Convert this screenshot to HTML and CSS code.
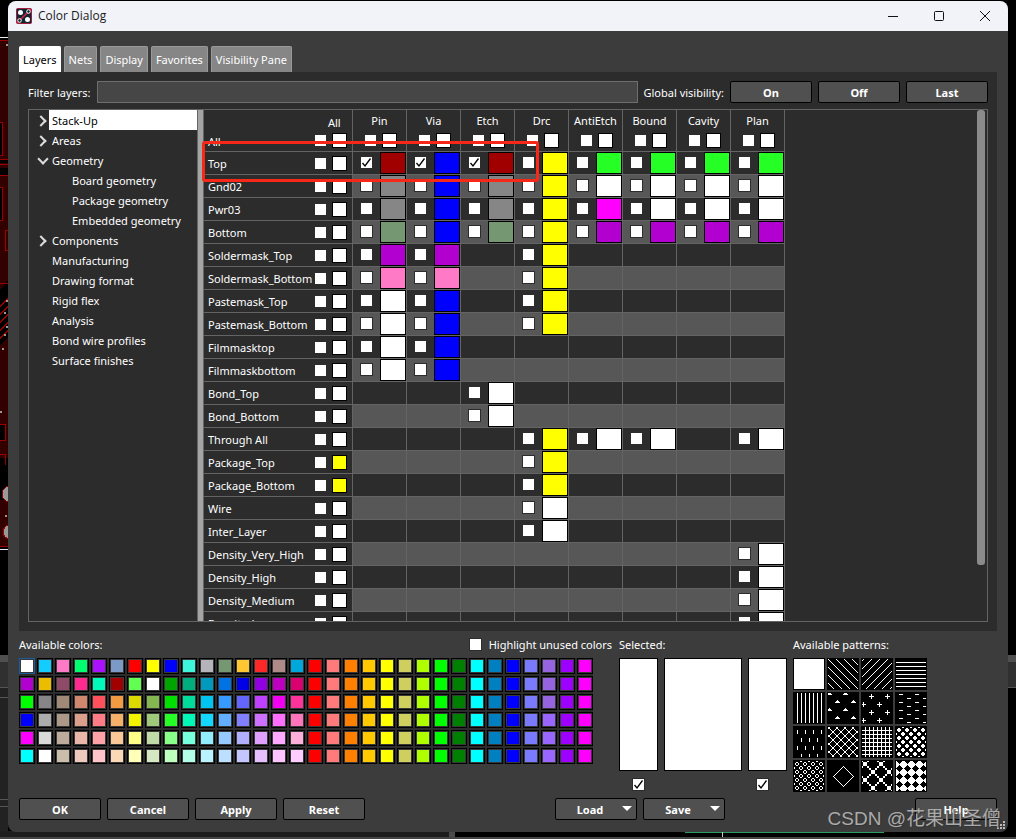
FILE: index.html
```html
<!DOCTYPE html>
<html lang="en">
<head>
<meta charset="utf-8">
<title>Color Dialog</title>
<link rel="stylesheet" href="styles.css">
</head>
<body>
<svg class="backdrop left" width="8" height="839" viewBox="0 0 8 839" aria-hidden="true" shape-rendering="crispEdges">
  <path fill="#000" d="M0 0h8v839H0z"/>
  <path fill="#330000" d="M0 40h8v240L0 290zM0 345h8v145H0zM0 345l8-8v20H0zM0 500h8v46H0z"/>
  <path fill="#000" d="M0 122h2v34H0zM0 160h8v3H0zM0 168h8v7H0zM0 188h2v33H0zM0 425h5v16H0zM0 458h8v32H0z"/>
  <path fill="none" stroke="#900" d="M0 40.500h8M0 122.500h2.500v33H0M0 159.500h8M0 164.500h8M0 175.500h8M0 187.500h2.500v33H0M8 230.500H5.500v20H8M0 283.500h8M0 306.500l8-8M0 314.500l8-8M0 322.500l8-8M0 330.500l8-8M0 338.500l8-8M0 424.500h5.500v16H0M0 454.500h5.500v10M0 546.500h8"/>
  <path fill="none" stroke="#eee" d="M0 37.500h8M0 549.500h8"/>
  <path fill="#999" d="M6 44h2v2H6zM6 300h2v2H6zM4 312h2v2H4zM6 326h2v2H6zM4 334h2v2H4zM2 348h2v2H2zM0 411h2v2H0zM5 515h2v2H5z"/>
  <circle cx="10" cy="494" r="8" fill="#999" stroke="#900"/><circle cx="10" cy="532" r="7" fill="#999" stroke="#900"/>
  <path fill="#505050" d="M0 655h8v7H0z"/><path fill="#303030" d="M0 662h8v26H0z"/><path fill="#222" d="M0 688h8v151H0z"/>
  <path stroke="#555" d="M0 687.500h8M0 697.500h8M0 799.500h8M0 806.500h8"/>
</svg>
<svg class="backdrop right" width="8" height="839" viewBox="0 0 8 839" aria-hidden="true" shape-rendering="crispEdges">
  <path fill="#000" d="M0 0h8v839H0z"/><path fill="#505050" d="M0 655h8v7H0z"/><path fill="#303030" d="M0 662h8v25H0z"/><path stroke="#555" d="M0 687.500h8"/>
</svg>
<svg class="backdrop bottom" width="1016" height="8" viewBox="0 0 1016 8" aria-hidden="true" shape-rendering="crispEdges">
  <path fill="#000" d="M0 0h1016v8H0z"/><path fill="#1d1d1d" d="M0 0h449v8H0z"/><path fill="#4a4a4a" d="M449 0h6v7h-6z"/><path fill="#2b9c62" d="M685 0h199v2H685z"/><path fill="#ccc" d="M722 1h1v5h-1z"/><path fill="#444" d="M0 6h1016v2H0z"/>
</svg>

<main class="dialog">
  <header class="titlebar">
    <svg class="app-icon" width="16" height="16" viewBox="0 0 16 16" aria-hidden="true">
      <rect x=".5" y=".5" width="15" height="15" rx="1" fill="#112634" stroke="#a51c38"/>
      <path d="M4 12L12 4M12 4l3-3M1 15l3-3" stroke="#e01f3f" stroke-width="1.500"/>
      <circle cx="4.500" cy="4.500" r="2.500" fill="#fff"/><circle cx="11.500" cy="11.500" r="2.500" fill="#fff"/>
      <circle cx="12.500" cy="3.500" r="1.800" fill="#112634" stroke="#fff"/><circle cx="3.500" cy="12.500" r="1.800" fill="#112634" stroke="#fff"/>
    </svg>
    <h1>Color Dialog</h1>
    <button class="win" aria-label="Minimize"><svg width="10" height="10" viewBox="0 0 10 10"><path d="M0 5.500h10" stroke="#111"/></svg></button>
    <button class="win" aria-label="Maximize"><svg width="10" height="10" viewBox="0 0 10 10"><rect x=".5" y=".5" width="9" height="9" rx="1" fill="none" stroke="#111"/></svg></button>
    <button class="win" aria-label="Close"><svg width="10" height="10" viewBox="0 0 10 10"><path d="M0 0l10 10M10 0L0 10" stroke="#111"/></svg></button>
  </header>

  <div class="content">
    <nav class="tabs" role="tablist">
      <button class="tab active" role="tab" aria-selected="true">Layers</button>
      <button class="tab" role="tab">Nets</button>
      <button class="tab" role="tab">Display</button>
      <button class="tab" role="tab">Favorites</button>
      <button class="tab" role="tab">Visibility Pane</button>
    </nav>

    <section class="panel">
      <div class="filter">
        <label for="filter">Filter layers:</label>
        <input id="filter" class="filter-input" type="text">
        <span class="filter-text">Global visibility:</span>
        <div class="button-group">
          <button class="btn">On</button>
          <button class="btn">Off</button>
          <button class="btn">Last</button>
        </div>
      </div>
      <div class="frame">
        <ul class="tree">
          <li class="closed selected"><span>Stack-Up</span></li>
          <li class="closed"><span>Areas</span></li>
          <li class="open"><span>Geometry</span></li>
          <li class="child"><span>Board geometry</span></li>
          <li class="child"><span>Package geometry</span></li>
          <li class="child"><span>Embedded geometry</span></li>
          <li class="closed"><span>Components</span></li>
          <li><span>Manufacturing</span></li>
          <li><span>Drawing format</span></li>
          <li><span>Rigid flex</span></li>
          <li><span>Analysis</span></li>
          <li><span>Bond wire profiles</span></li>
          <li><span>Surface finishes</span></li>
        </ul>
        <div class="splitter"></div>
        <div class="grid-view">
          <table class="layers">
            <thead><tr id="head"></tr></thead>
            <tbody id="rows"></tbody>
          </table>
          <div class="scroll"><div class="thumb"></div></div>
        </div>
        <div class="annotation"></div>
      </div>
    </section>

    <div class="pickers">
      <section class="colors">
        <div class="picker-head">
          <span>Available colors:</span>
          <label class="unused"><input type="checkbox" class="check">Highlight unused colors</label>
        </div>
        <div class="palette" id="palette"></div>
      </section>
      <section>
        <div class="picker-head">Selected:</div>
        <div class="previews">
          <div class="preview"><div class="preview-box"></div><input type="checkbox" class="check" aria-label="Use color" checked></div>
          <div class="preview wide"><div class="preview-box"></div></div>
          <div class="preview end"><div class="preview-box"></div><input type="checkbox" class="check" aria-label="Use pattern" checked></div>
        </div>
      </section>
      <section>
        <div class="picker-head">Available patterns:</div>
        <div class="patterns" id="patterns"></div>
      </section>
    </div>

    <footer class="actions">
      <button class="btn">OK</button>
      <button class="btn">Cancel</button>
      <button class="btn">Apply</button>
      <button class="btn">Reset</button>
      <span class="space"></span>
      <button class="btn menu">Load</button>
      <button class="btn menu">Save</button>
      <span class="space"></span>
      <button class="btn">Help</button>
    </footer>
  </div>
  <svg class="grip" width="8" height="8" viewBox="0 0 8 8" aria-hidden="true"><path fill="#bbb" d="M6 0h2v2H6zM3 3h2v2H3zM6 3h2v2H6zM0 6h2v2H0zM3 6h2v2H3zM6 6h2v2H6z"/></svg>
</main>
<div class="watermark">CSDN @花果山圣僧</div>
<script src="app.js"></script>
</body>
</html>
```

FILE: styles.css
```css
* { box-sizing: border-box; }

body {
  margin: 0;
  padding: 1px 8px 7px;
  height: 100vh;
  position: relative;
  display: flex;
  background: #000;
  color: #fff;
  font: 11px/16px "Noto Sans", "Noto Sans CJK SC", sans-serif;
  overflow: hidden;
}

button { font: inherit; color: inherit; padding: 0; border: 0; }

.backdrop { position: absolute; }
.backdrop.left { left: 0; top: 0; }
.backdrop.right { right: 0; top: 0; }
.backdrop.bottom { left: 0; bottom: 0; }

.dialog {
  position: relative;
  flex: 1;
  min-width: 0;
  display: flex;
  flex-direction: column;
  background: #3c3c3c;
  border-radius: 8px;
  overflow: hidden;
}

.titlebar {
  height: 30px;
  flex: none;
  display: flex;
  align-items: center;
  padding-left: 8px;
  background: #f1f3f9;
  color: #1a1a1a;
}
.titlebar h1 {
  flex: 1;
  margin: 0 0 0 6px;
  font: 12px/16px "Open Sans", sans-serif;
}
.win {
  width: 46px;
  height: 28px;
  display: flex;
  align-items: center;
  justify-content: center;
  background: none;
}

.content {
  flex: 1;
  min-height: 0;
  display: flex;
  flex-direction: column;
  padding: 15px 11px 12px;
}

.tabs { display: flex; gap: 3px; }
.tab {
  height: 26px;
  padding: 0 4px;
  border: 1px solid #999;
  border-bottom: 0;
  border-radius: 2px 2px 0 0;
  background: #868686;
  white-space: nowrap;
}
.tab.active { background: #fff; border-color: #fff; color: #000; padding: 0 3px; }

.panel {
  flex: 1;
  min-height: 0;
  display: flex;
  flex-direction: column;
  gap: 6px;
  padding: 9px 9px;
  background: #2c2c2c;
}

.filter { display: flex; align-items: center; gap: 6px; }
.filter label, .filter-text { line-height: 20px; padding-top: 2px; }
.filter-input {
  flex: 1;
  min-width: 0;
  height: 22px;
  background: #464646;
  border: 1px solid #6e6e6e;
  color: #fff;
  font: inherit;
}
.button-group { display: flex; gap: 6px; }
.btn {
  width: 82px;
  height: 22px;
  padding-top: 2px;
  border: 1px solid #000;
  border-radius: 2px;
  background: #505050;
  font-weight: 700;
}
.menu { position: relative; padding-right: 12px; }
.menu::after {
  content: "";
  position: absolute;
  right: 4px;
  top: 7px;
  border: 5px solid transparent;
  border-top-color: #fff;
  border-bottom: 0;
}

.frame {
  position: relative;
  flex: 1;
  min-height: 0;
  display: flex;
  border: 1px solid #646464;
}
.tree {
  width: 169px;
  margin: 0;
  padding: 0;
  list-style: none;
  border-right: 1px solid #646464;
}
.tree li { position: relative; height: 20px; padding-left: 20px; }
.tree li span { display: block; height: 20px; padding-left: 3px; line-height: 22px; white-space: nowrap; }
.tree .child { padding-left: 40px; }
.tree .selected span { background: #fff; color: #000; }
.closed::before, .open::before {
  content: "";
  position: absolute;
  left: 8px;
  top: 7px;
  width: 6px;
  height: 6px;
  border: solid #ddd;
  border-width: 2px 2px 0 0;
  transform: rotate(45deg);
}
.open::before { left: 10px; top: 5px; transform: rotate(135deg); }
.splitter { width: 5px; background: #a5a5a5; }
.grid-view {
  flex: 1;
  min-width: 0;
  display: flex;
  justify-content: space-between;
  align-items: flex-start;
  border-left: 1px solid #646464;
  overflow: hidden;
}

.layers { table-layout: fixed; width: 581px; border-spacing: 0; }
.layers th, .layers td { padding: 0; border-right: 1px solid #646464; font-weight: 400; }
.layers thead th { width: 54px; height: 41px; vertical-align: top; }
.layers thead th:first-child { width: 149px; }
.layers tbody th, .layers tbody td { height: 23px; border-top: 1px solid #646464; }
.layers tbody tr:nth-child(even) td { background: #575757; }
.head-name { display: grid; grid-template-columns: 107px 17px 15px; padding: 3px 0 0 4px; text-align: left; }
.head-name .caption { grid-column: 2 / 4; padding-left: 13px; height: 20px; line-height: 20px; }
.head-name .row-label { grid-column: 1; line-height: 18px; }
.head-name .check { margin-top: 2px; }
.head-name .small { height: 15px; }
.head-title { display: block; text-align: center; line-height: 22px; height: 23px; }
.head-boxes { display: grid; grid-template-columns: 17px 15px; align-items: center; padding-left: 12px; }
.name-cell { display: grid; grid-template-columns: 107px 17px 15px; align-items: center; height: 22px; padding-left: 4px; text-align: left; white-space: nowrap; }
.name-cell label { line-height: 20px; padding-top: 2px; }
.cell { display: grid; grid-template-columns: 19px 26px; height: 22px; padding-left: 8px; }
.cell .check { margin-top: 5px; }

.check {
  appearance: none;
  display: block;
  flex: none;
  width: 11px;
  height: 11px;
  margin: 0;
  background: #fff;
  outline: 1px solid #2c2c2c;
}
.check:checked {
  background: #fff url("data:image/svg+xml,%3Csvg xmlns='http://www.w3.org/2000/svg' viewBox='0 0 11 11'%3E%3Cpath d='M1.500 6l2.500 3L9.500 1.500' fill='none' stroke='%23000' stroke-width='1.300'/%3E%3C/svg%3E");
}
.swatch { border: 1px solid #000; background: #fff; }
.small { width: 15px; height: 15px; }

.scroll { align-self: stretch; width: 10px; }
.thumb { width: 8px; height: 89%; border-radius: 3px; background: #8b8b8b; }
.annotation {
  position: absolute;
  left: 173px;
  top: 31px;
  width: 337px;
  height: 41px;
  border: 3px solid #f82818;
  border-radius: 3px;
  pointer-events: none;
}

.pickers { display: flex; gap: 6px; padding-top: 6px; }
.picker-head { display: flex; justify-content: space-between; height: 21px; white-space: nowrap; }
.colors { width: 594px; }
.unused { display: flex; gap: 8px; padding-right: 1px; }
.unused .check { margin-top: 2px; }
.palette { display: grid; grid-template-columns: repeat(32, 16px); gap: 2px; width: 574px; background: #2c2c2c; }
.color { width: 16px; height: 16px; border: 1px solid #000; outline: 1px solid #383838; outline-offset: -2px; }
.color:first-child { border-color: #1d5c9c; }
.previews { display: flex; gap: 6px; }
.preview { width: 39px; display: flex; flex-direction: column; align-items: center; gap: 8px; }
.preview.wide { width: 78px; }
.preview.end .check { align-self: flex-start; margin-left: 9px; }
.preview-box { align-self: stretch; height: 113px; border: 1px solid #000; background: #fff; }
.patterns { display: grid; grid-template-columns: repeat(4, 32px); gap: 2px; }
.pattern { width: 32px; height: 32px; background: #000; }
.pattern svg { display: block; }

.actions { display: flex; gap: 6px; padding-top: 6px; }
.space { flex: 1; }

.grip { position: absolute; right: 3px; bottom: 3px; }
.watermark {
  position: absolute;
  right: 15px;
  bottom: 5px;
  color: #aaa;
  font: 19px/30px "Liberation Sans", "Noto Sans CJK SC", sans-serif;
  text-shadow: 1px 1px 1px #333;
  pointer-events: none;
}
```

FILE: app.js
```javascript
const columns = ["Pin", "Via", "Etch", "Drc", "AntiEtch", "Bound", "Cavity", "Plan"];
const ink = {
  r: "#a00000", b: "#0000ff", g: "#868686", s: "#759873", v: "#b200d0", p: "#ff7ac6",
  w: "#ffffff", y: "#ffff00", l: "#26ff26", m: "#ff00ff"
};
// One letter per column; a dot leaves the cell empty.
const layers = [
  ["Top", "rbryllll"], ["Gnd02", "gbgywwww"], ["Pwr03", "gbgymwww"], ["Bottom", "sbsyvvvv"],
  ["Soldermask_Top", "vv.y...."], ["Soldermask_Bottom", "pp.y...."],
  ["Pastemask_Top", "wb.y...."], ["Pastemask_Bottom", "wb.y...."],
  ["Filmmasktop", "wb......"], ["Filmmaskbottom", "wb......"],
  ["Bond_Top", "..w....."], ["Bond_Bottom", "..w....."], ["Through All", "...yww.w"],
  ["Package_Top", "...y....", "y"], ["Package_Bottom", "...y....", "y"],
  ["Wire", "...w...."], ["Inter_Layer", "...w...."],
  ["Density_Very_High", ".......w"], ["Density_High", ".......w"],
  ["Density_Medium", ".......w"], ["Density_Low", ".......w"]
];

const check = (label, on = false, id = "") =>
  `<input type="checkbox" class="check" aria-label="${label}"${id && ` id="${id}"`}${on ? " checked" : ""}>`;
const swatch = (color, label, small) =>
  `<button class="swatch${small ? " small" : ""}" aria-label="${label} color" style="background:${color}"></button>`;

document.getElementById("head").innerHTML =
  `<th scope="col"><div class="head-name"><span class="caption">All</span><span class="row-label">All</span>${check("All layers")}${swatch(ink.w, "All", true)}</div></th>` +
  columns.map(c => `<th scope="col"><span class="head-title">${c}</span><div class="head-boxes">${check("All " + c)}${swatch(ink.w, c, true)}</div></th>`).join("");

document.getElementById("rows").innerHTML = layers.map(([name, cells, own = "w"], i) =>
  `<tr><th scope="row"><div class="name-cell"><label for="layer${i}">${name}</label>${check(name, false, "layer" + i)}${swatch(ink[own], name, true)}</div></th>` +
  [...cells].map((c, j) => c === "." ? "<td></td>" :
    `<td><div class="cell">${check(name + " " + columns[j], i === 0 && j < 3)}${swatch(ink[c], name + " " + columns[j])}</div></td>`).join("") + "</tr>").join("");

const palette = [
  "fff 13cdff ff7ac6 00ff6e a911ff 7c9ac6 f00 ff0 00f 3df7da b4b4ba 759873 ffc832 ff2828 ae8a88 00a7da",
  "b200d0 ecbc00 8f4a68 ff2a90 00f9bb a00000 62ff52 fff 00a400 00ad7c 0099bd 0072e4 0000e8 9000e0 bd00c0 d9006f",
  "0f0 868686 a08976 d1876e ff505c f19a41 dada00 84b750 00e000 00da9a 00c3f2 369aff 6464ff bf40ff f200f2 ff3399",
  "00f acacac ab9886 dba08b ff7b85 f5b06a f3f300 9fc97a 26ff26 00f7b5 13d7ff 63afff 8080ff cd70ff ff6eff ff75bb",
  "f0f dadada bdab9b e9b6a8 ffa1a9 f9c896 ffff88 c1dba8 88ff88 75ffdb 92edff 96caff b0b0ff dfa0ff ffa8ff ffb0da",
  "0ff fff cabda9 ecc8bd ffc3c8 fbd8b5 ffffb8 d4e8c2 bdffbd b0ffe6 b8f3ff bcdfff c4c4ff e7beff ffc4ff fcf"
];
const shared = "f00 ff7b7b ff8000 ffc800 ff0 cfcf5f b0ff00 0f0 008000 0ff 0080c0 00f 7a7aff 9664e0 9d00ff f0f";
document.getElementById("palette").innerHTML = palette.flatMap((row, i) =>
  (row + " " + (i < 3 ? shared : shared.replace("9664e0", "9966ff"))).split(" ")
).map(c => `<button class="color" aria-label="#${c}" style="background:#${c}"></button>`).join("");

// Each pattern is painted pixel by pixel on a 30 x 30 field inside a one pixel border.
const mod = (a, n) => ((a % n) + n) % n;
const near = (x, y, cx, cy, n) => {
  const wrap = d => { const m = mod(d, n); return m > n / 2 ? m - n : m; };
  return [wrap(x - cx), wrap(y - cy)];
};
const plus = (dx, dy) => (dx === 0 && Math.abs(dy) < 3) || (dy === 0 && Math.abs(dx) < 3);
const wedge = (dx, dy) => (dy === 0 && Math.abs(dx) < 3) || (dy === -1 && Math.abs(dx) < 2) || (dy === -2 && dx === 0);
const reach = d => Math.abs(d - 0.5);
const dot = (dx, dy) => reach(dx) < 2 && reach(dy) < 2 && reach(dx) + reach(dy) < 3;
const ring = (dx, dy) => dot(dx, dy) && reach(dx) + reach(dy) > 1;
const staggered = (shape, cx, cy, n) => (x, y) =>
  shape(...near(x, y, cx, cy, n)) || shape(...near(x, y, cx + n / 2, cy + n / 2, n));
const rules = [
  () => true,
  (x, y) => mod(x - y, 8) === 0,
  (x, y) => mod(x + y, 8) === 3,
  (x, y) => y % 4 === 0,
  (x, y) => x % 4 === 0,
  staggered(wedge, 2, 2, 16),
  staggered(plus, 10, 4, 16),
  (x, y) => (y % 8 === 2 && x % 16 > 3 && x % 16 < 8) || (y % 8 === 6 && x % 16 > 11),
  (x, y) => (x % 8 === 4 && y % 16 > 3 && y % 16 < 8) || (x % 8 === 0 && y % 16 > 11),
  (x, y) => mod(x - y, 8) === 0 || mod(x + y, 8) === 3,
  (x, y) => x % 4 === 0 || y % 4 === 0,
  staggered(dot, 3, 3, 8),
  staggered(ring, 3, 3, 8),
  (x, y) => Math.abs(x - 16) + Math.abs(y - 16) === 10,
  (x, y) => mod((x >> 1) - (y >> 1), 8) === 0 || mod((x >> 1) + (y >> 1), 8) === 3,
  (x, y) => { const [dx, dy] = near(x, y, 4, 0, 8); return Math.abs(dx) + Math.abs(dy) > 3; }
];
document.getElementById("patterns").innerHTML = rules.map((rule, i) => {
  let d = "";
  for (let y = 1; y < 31; y++)
    for (let x = 1; x < 31; x++)
      if (rule(x, y)) d += `M${x} ${y}h1v1h-1z`;
  return `<button class="pattern" aria-label="Pattern ${i + 1}"><svg width="32" height="32" viewBox="0 0 32 32" shape-rendering="crispEdges"><path fill="#fff" d="${d}"/></svg></button>`;
}).join("");
```
